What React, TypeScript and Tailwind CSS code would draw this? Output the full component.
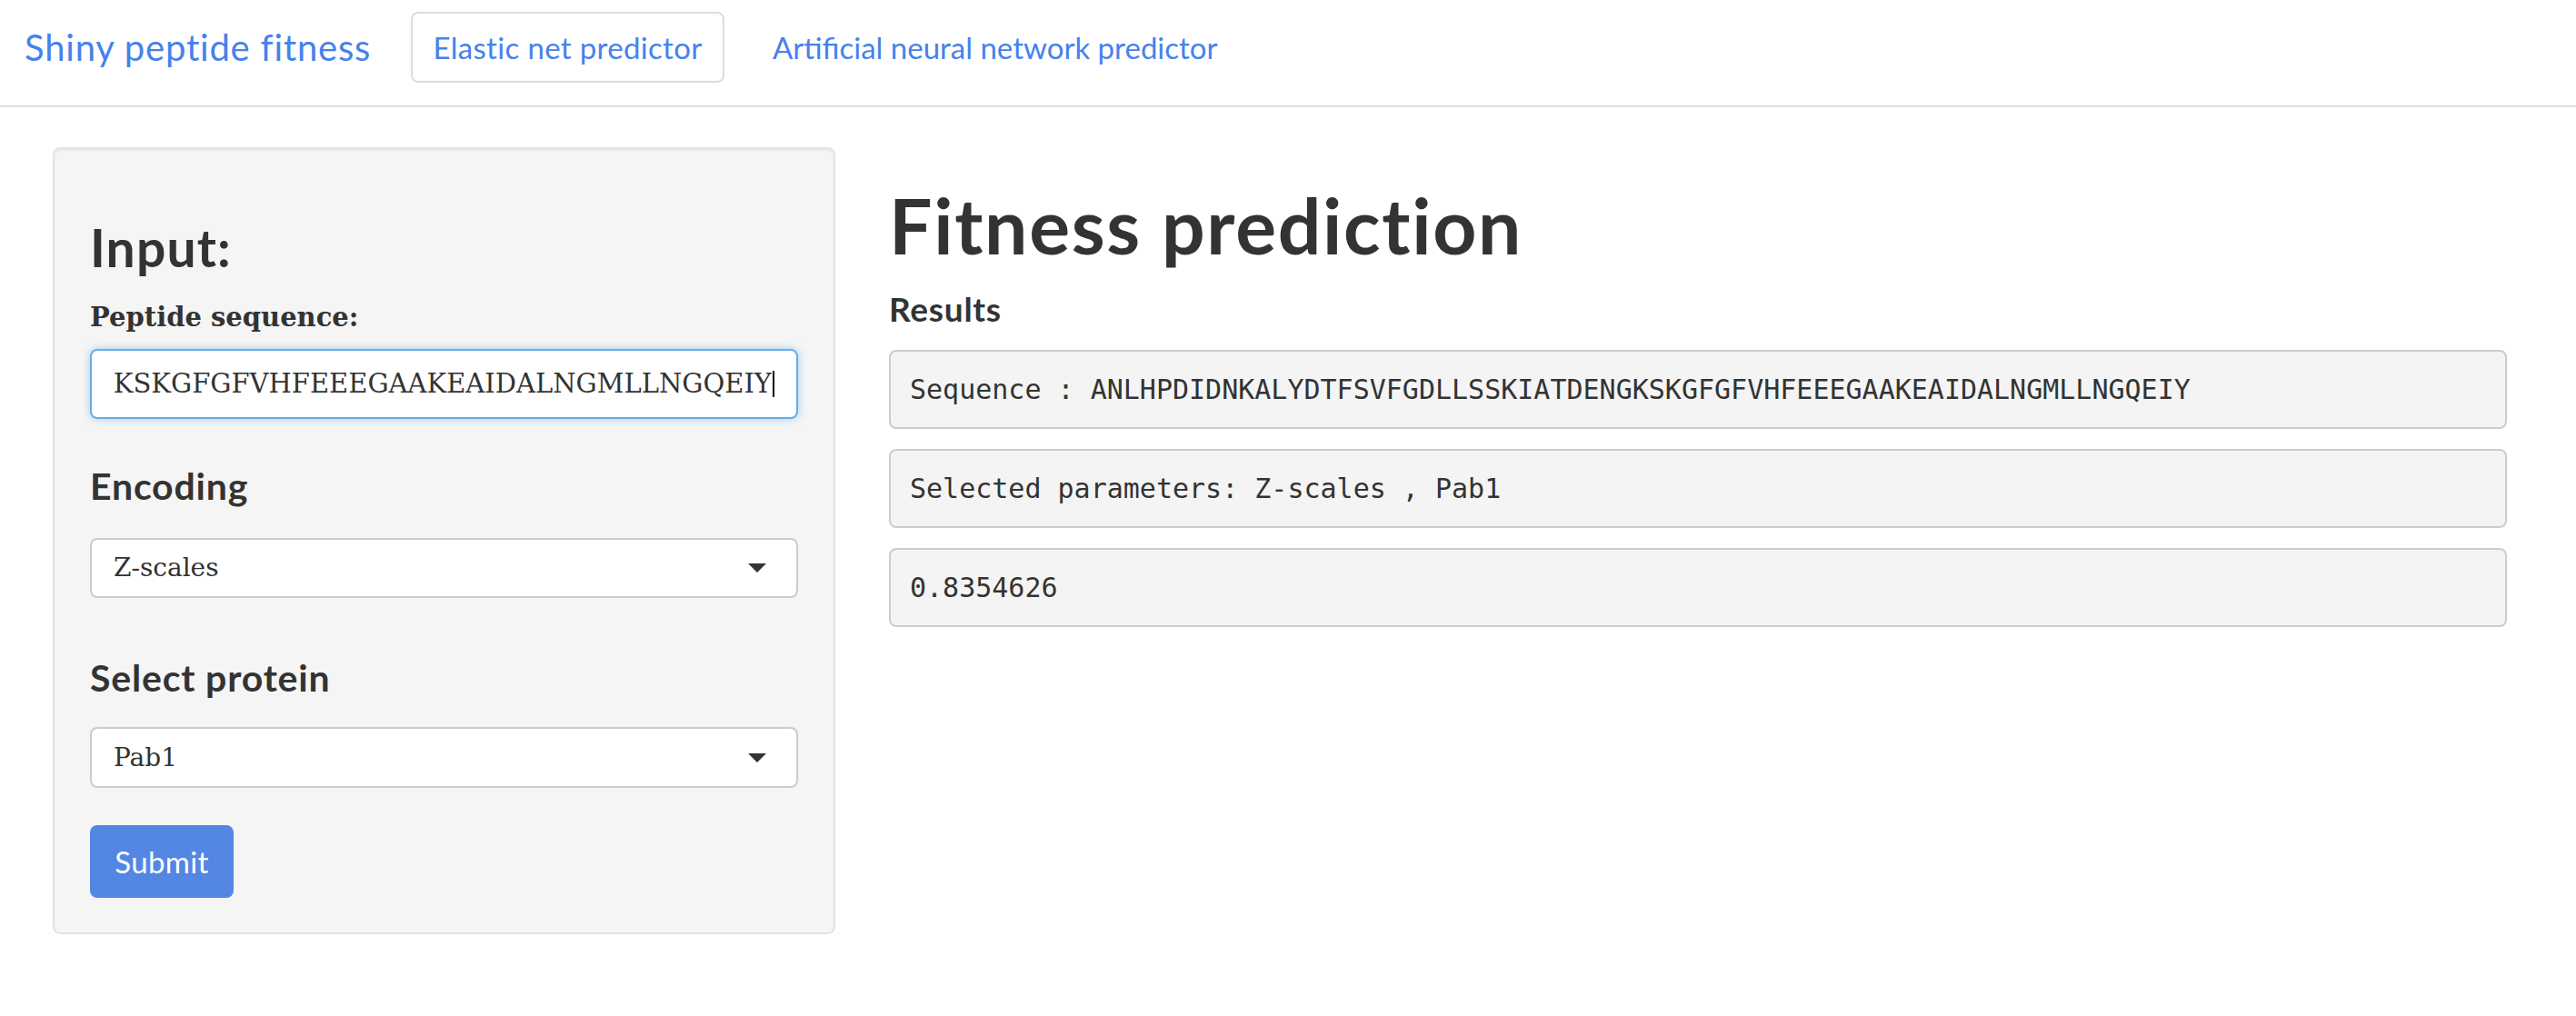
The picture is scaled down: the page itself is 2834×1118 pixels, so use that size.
import React from "react";

const heading = "font-['Lato','Noto_Sans',sans-serif] font-bold text-[#333333] leading-none tracking-[0.02em]";
const serif = "font-['DejaVu_Serif','Liberation_Serif',serif]";
const mono = "font-['DejaVu_Sans_Mono','Liberation_Mono',monospace]";

const sequence = "ANLHPDIDNKALYDTFSVFGDLLSSKIATDENGKSKGFGFVHFEEEGAAKEAIDALNGMLLNGQEIY";

function SelectBox({ value, className }: { value: string; className: string }) {
  return (
    <div
      className={`${className} flex items-center justify-between rounded-[8px] border-2 border-[#cccccc] bg-white pl-[24px] pr-[33px]`}
    >
      <span className={`${serif} text-[28px] leading-none text-[#333333]`}>{value}</span>
      <svg width="20" height="10" viewBox="0 0 20 10" aria-hidden="true">
        <polygon points="0,0 20,0 10,10" fill="#333333" />
      </svg>
    </div>
  );
}

function ResultBox({ text, className }: { text: string; className: string }) {
  return (
    <div
      className={`${className} flex h-[87px] items-center rounded-[8px] border-2 border-[#cccccc] bg-[#f4f4f4] pl-[21px]`}
    >
      <span className={`${mono} text-[30px] leading-none whitespace-pre text-[#333333]`}>{text}</span>
    </div>
  );
}

export default function App() {
  return (
    <div className="min-h-[1118px] w-full bg-white font-['Lato','Noto_Sans',sans-serif]">
      {/* navbar */}
      <nav className="flex h-[118px] items-start border-b-2 border-[#dddddd] pt-[13px]">
        <div className="flex h-[78px] w-[452px] items-center pl-[27px]">
          <span className="text-[40px] leading-none tracking-[0.02em] text-[#4582ec]">Shiny peptide fitness</span>
        </div>
        <div className="flex h-[78px] w-[345px] items-center justify-center rounded-[8px] border-2 border-[#dddddd]">
          <span className="text-[33px] leading-none tracking-[0.01em] text-[#4582ec]">Elastic net predictor</span>
        </div>
        <div className="ml-[27px] flex h-[78px] items-center px-[26px]">
          <span className="text-[33px] leading-none text-[#4582ec]">Artificial neural network predictor</span>
        </div>
      </nav>

      <main className="flex pt-[44px]">
        {/* sidebar well */}
        <div className="ml-[58px] flex w-[861px] flex-col rounded-[8px] border-2 border-[#e3e3e3] bg-[#f5f5f5] px-[39px] pt-[80px] pb-[38px] shadow-[inset_0_2px_2px_rgba(0,0,0,0.05)]">
          <h3 className={`${heading} text-[57px]`}>Input:</h3>
          <label className={`${serif} mt-[34px] text-[29px] font-bold leading-none text-[#333333]`}>
            Peptide sequence:
          </label>
          <div className="mt-[20px] flex h-[77px] items-center rounded-[8px] border-2 border-[#66afe9] bg-white px-[24px] shadow-[0_0_8px_rgba(102,175,233,0.6)]">
            <div className="flex flex-1 justify-end overflow-hidden">
              <span className={`${serif} text-[29px] leading-none whitespace-nowrap text-[#333333]`}>
                {sequence}
              </span>
            </div>
            <div className="ml-[1px] h-[29px] w-[2px] shrink-0 bg-black" />
          </div>

          <h4 className={`${heading} mt-[53px] text-[41px]`}>Encoding</h4>
          <SelectBox value="Z-scales" className="mt-[37px] h-[66px]" />

          <h4 className={`${heading} mt-[67px] text-[41px]`}>Select protein</h4>
          <SelectBox value="Pab1" className="mt-[34px] h-[67px]" />

          <button className="mt-[41px] flex h-[80px] w-[158px] items-center justify-center rounded-[8px] bg-[#5486e4] text-[33px] leading-none tracking-[0.01em] text-white">
            Submit
          </button>
        </div>

        {/* main panel */}
        <div className="mr-[76px] ml-[59px] flex flex-1 flex-col">
          <h1 className={`${heading} mt-[44px] text-[84px]`}>Fitness prediction</h1>
          <h4 className={`${heading} mt-[31px] text-[37px]`}>Results</h4>
          <ResultBox className="mt-[27px]" text={`Sequence : ${sequence}`} />
          <ResultBox className="mt-[22px]" text="Selected parameters: Z-scales , Pab1" />
          <ResultBox className="mt-[22px]" text="0.8354626" />
        </div>
      </main>
    </div>
  );
}
